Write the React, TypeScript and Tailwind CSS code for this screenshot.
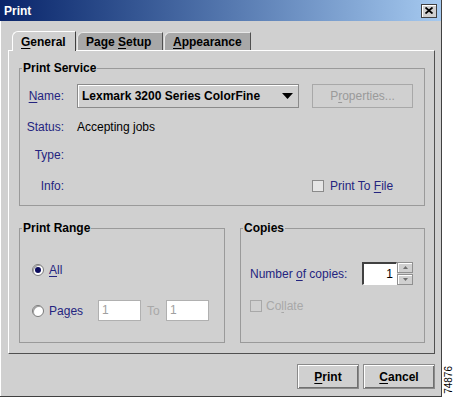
import React from 'react';

const label = "text-[12px] leading-[14px] text-[#24247f]";

function U({ children }: { children: React.ReactNode }) {
  return <span className="underline underline-offset-[2px]">{children}</span>;
}

function Checkbox({ disabled }: { disabled?: boolean }) {
  return (
    <span
      className={`inline-block w-[12px] h-[12px] border ${
        disabled ? 'border-[#a8a8a8] bg-[#d0d0d0]' : 'border-[#8a8a8a] bg-[#e6e6e6]'
      }`}
    />
  );
}

function Radio({ checked }: { checked?: boolean }) {
  return (
    <span className="flex items-center justify-center w-[12px] h-[12px] rounded-full border border-[#7a7a7a] bg-white shadow-[inset_1px_1px_0_#a0a0a0]">
      {checked && <span className="w-[6px] h-[6px] rounded-full bg-[#0c0c5e]" />}
    </span>
  );
}

function Button({ children, w }: { children: React.ReactNode; w: string }) {
  return (
    <button
      className={`${w} h-[25px] border border-[#8a8a8a] bg-[#d0d0d0] shadow-[inset_1px_1px_0_#ffffff,inset_-1px_-1px_0_#707070] text-[12px] font-bold text-black`}
    >
      {children}
    </button>
  );
}

export default function App() {
  return (
    <div className="flex w-[455px] h-[397px] bg-white font-['Liberation_Sans',Arial,sans-serif]">
      {/* dialog window */}
      <div className="flex flex-col w-[442px] h-[397px] bg-[#d0d0d0] border-r border-b border-[#404040] shadow-[inset_1px_0_0_#ffffff]">
        {/* title bar */}
        <div className="flex items-center justify-between h-[21px] pl-[4px] pr-[4px] bg-gradient-to-r from-[#0a246a] to-[#a6caf0]">
          <span className="text-[12px] font-bold text-white">Print</span>
          <span className="flex items-center justify-center w-[16px] h-[14px] bg-[#d0d0d0] border border-[#404040] shadow-[inset_1px_1px_0_#ffffff]">
            <svg width="8" height="7" viewBox="0 0 8 7">
              <path d="M0.5 0.5 L7.5 6.5 M7.5 0.5 L0.5 6.5" stroke="#000" strokeWidth="1.8" />
            </svg>
          </span>
        </div>

        {/* tabs */}
        <div className="flex items-end mt-[10px] ml-[12px] h-[19px] relative z-10">
          <div className="flex items-center h-[20px] w-[64px] -mb-[1px] pl-[8px] bg-[#d0d0d0] border-t border-l border-white border-r border-r-[#404040] rounded-tl-[6px] text-[12px] font-bold text-black">
            <U>G</U>eneral
          </div>
          <div className="flex items-center h-[18px] w-[86px] ml-[1px] pl-[8px] bg-[#a8a8a8] border-t border-l border-[#e8e8e8] border-r border-r-[#505050] rounded-tl-[6px] text-[12px] font-bold text-black">
            Page&nbsp;<U>S</U>etup
          </div>
          <div className="flex items-center h-[18px] w-[87px] ml-[1px] pl-[8px] bg-[#a8a8a8] border-t border-l border-[#e8e8e8] border-r border-r-[#505050] rounded-tl-[6px] text-[12px] font-bold text-black">
            <U>A</U>ppearance
          </div>
        </div>

        {/* panel */}
        <div className="ml-[8px] w-[427px] h-[304px] border-t border-l border-white border-r border-b border-r-[#505050] border-b-[#505050] pt-[10px] pl-[10px]">
          <fieldset className="w-[406px] border border-[#9a9a9a] pb-[12px]">
            <legend className="ml-[2px] px-[1px] text-[12px] leading-[14px] font-bold text-black">Print Service</legend>
            <div className="grid grid-cols-[44px_222px_101px] gap-x-[13px] mt-[9px]">
              <div className={`${label} text-right self-center`}>
                <U>N</U>ame:
              </div>
              <div className="flex items-center justify-between h-[24px] border border-[#8a8a8a] bg-[#d0d0d0] shadow-[inset_1px_1px_0_#ffffff] pl-[4px] pr-[5px]">
                <span className="text-[12px] font-bold text-black">Lexmark 3200 Series ColorFine</span>
                <svg width="11" height="6" viewBox="0 0 11 6">
                  <path d="M0 0 L11 0 L5.5 6 Z" fill="#000" />
                </svg>
              </div>
              <div className="flex items-center justify-center h-[24px] border border-[#a8a8a8] text-[12px] text-[#9a9a9a]">
                P<U>r</U>operties...
              </div>

              <div className={`${label} text-right mt-[12px]`}>Status:</div>
              <div className="text-[12px] leading-[14px] text-black mt-[12px] col-span-2">Accepting jobs</div>

              <div className={`${label} text-right mt-[14px]`}>Type:</div>
              <div className="mt-[14px] col-span-2" />

              <div className={`${label} text-right mt-[17px]`}>Info:</div>
              <div className="mt-[17px]" />
              <div className="flex items-center gap-[6px] mt-[16px]">
                <Checkbox />
                <span className="text-[12px] leading-[14px] text-[#24247f]">
                  Print To <U>F</U>ile
                </span>
              </div>
            </div>
          </fieldset>

          <div className="flex gap-[15px] mt-[15px]">
            <fieldset className="w-[206px] h-[122px] border border-[#9a9a9a] pl-[12px]">
              <legend className="ml-[-10px] px-[1px] text-[12px] leading-[14px] font-bold text-black">Print Range</legend>
              <div className="flex items-center gap-[5px] mt-[28px]">
                <Radio checked />
                <span className={label}>
                  <U>A</U>ll
                </span>
              </div>
              <div className="flex items-center mt-[23px]">
                <Radio />
                <span className={`${label} ml-[5px] w-[49px]`}>
                  Pa<U>g</U>es
                </span>
                <span className="w-[43px] h-[21px] border border-[#b0b0b0] bg-white pl-[3px] text-[12px] leading-[19px] text-[#a0a0a0]">1</span>
                <span className="ml-[6px] w-[13px] text-[12px] text-[#a8a8a8]">To</span>
                <span className="ml-[6px] w-[43px] h-[21px] border border-[#b0b0b0] bg-white pl-[3px] text-[12px] leading-[19px] text-[#a0a0a0]">1</span>
              </div>
            </fieldset>

            <fieldset className="w-[185px] h-[122px] border border-[#9a9a9a] pl-[9px]">
              <legend className="ml-[-7px] px-[1px] text-[12px] leading-[14px] font-bold text-black">Copies</legend>
              <div className="flex items-center mt-[27px]">
                <span className={`${label} w-[112px]`}>
                  Number <U>o</U>f copies:
                </span>
                <div className="flex h-[23px]">
                  <span className="w-[35px] h-[23px] border-t-2 border-l-2 border-[#404040] border-r border-b border-r-white border-b-white bg-white pr-[3px] text-right text-[12px] leading-[20px] text-black">
                    1
                  </span>
                  <div className="flex flex-col w-[16px]">
                    <span className="flex items-center justify-center h-[11px] mb-[1px] bg-[#d0d0d0] border border-[#909090] shadow-[inset_1px_1px_0_#ffffff]">
                      <svg width="5" height="3" viewBox="0 0 5 3">
                        <path d="M0 3 L5 3 L2.5 0 Z" fill="#707070" />
                      </svg>
                    </span>
                    <span className="flex items-center justify-center h-[11px] bg-[#d0d0d0] border border-[#909090] shadow-[inset_1px_1px_0_#ffffff]">
                      <svg width="5" height="3" viewBox="0 0 5 3">
                        <path d="M0 0 L5 0 L2.5 3 Z" fill="#707070" />
                      </svg>
                    </span>
                  </div>
                </div>
              </div>
              <div className="flex items-center gap-[4px] mt-[14px]">
                <Checkbox disabled />
                <span className="text-[12px] leading-[14px] text-[#a8a8a8]">
                  Co<U>l</U>late
                </span>
              </div>
            </fieldset>
          </div>
        </div>

        {/* buttons */}
        <div className="flex justify-end gap-[4px] mt-[10px] pr-[6px]">
          <Button w="w-[62px]">
            <U>P</U>rint
          </Button>
          <Button w="w-[72px]">
            <U>C</U>ancel
          </Button>
        </div>
      </div>

      {/* figure number strip */}
      <div className="flex flex-col justify-end items-center w-[13px] pb-[3px]">
        <span className="[writing-mode:vertical-rl] rotate-180 text-[10px] leading-[10px] text-black">74876</span>
      </div>
    </div>
  );
}
